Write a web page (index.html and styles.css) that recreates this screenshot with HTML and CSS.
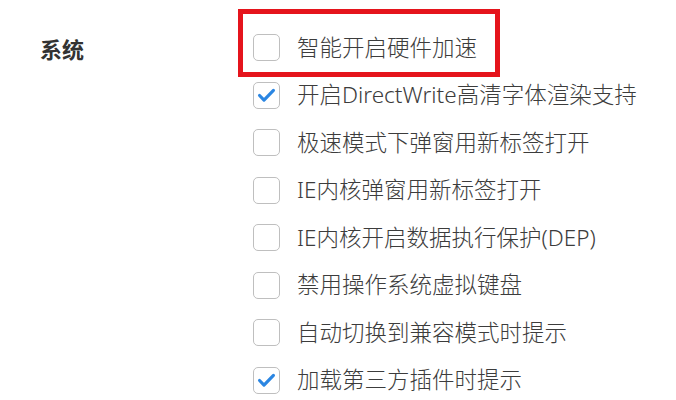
FILE: index.html
```html
<!DOCTYPE html>
<html lang="zh-CN">
<head>
<meta charset="utf-8">
<title>系统设置</title>
<link rel="stylesheet" href="styles.css">
</head>
<body>
<div class="section">
  <div class="label">系统</div>
  <div class="options">
    <label class="row highlighted"><span class="box"></span><span class="text">智能开启硬件加速</span></label>
    <label class="row"><span class="box checked"><svg viewBox="0 0 27 27"><polyline points="6,13.5 10.8,18.5 21,8"/></svg></span><span class="text">开启DirectWrite高清字体渲染支持</span></label>
    <label class="row"><span class="box"></span><span class="text">极速模式下弹窗用新标签打开</span></label>
    <label class="row"><span class="box"></span><span class="text">IE内核弹窗用新标签打开</span></label>
    <label class="row"><span class="box"></span><span class="text">IE内核开启数据执行保护(DEP)</span></label>
    <label class="row"><span class="box"></span><span class="text">禁用操作系统虚拟键盘</span></label>
    <label class="row"><span class="box"></span><span class="text">自动切换到兼容模式时提示</span></label>
    <label class="row"><span class="box checked"><svg viewBox="0 0 27 27"><polyline points="6,13.5 10.8,18.5 21,8"/></svg></span><span class="text">加载第三方插件时提示</span></label>
  </div>
</div>
</body>
</html>
```
FILE: styles.css
```css
html, body {
  margin: 0;
  padding: 0;
  background: #ffffff;
}
body {
  font-family: "Noto Sans", "Noto Sans CJK SC", sans-serif;
  color: #3a3a3a;
  width: 676px;
  height: 400px;
  overflow: hidden;
}
.section {
  display: flex;
  padding-top: 24px;
}
.label {
  width: 213px;
  padding-left: 40px;
  height: 48px;
  line-height: 48px;
  font-size: 22px;
  font-weight: 700;
  color: #333;
  font-family: "Noto Sans CJK SC", sans-serif;
}
.options {
  display: flex;
  flex-direction: column;
}
.row {
  display: flex;
  align-items: center;
  gap: 17px;
  height: 47.5px;
  position: relative;
}
.highlighted::before {
  content: "";
  position: absolute;
  left: -15px;
  top: -15px;
  width: 262px;
  height: 68px;
  box-sizing: border-box;
  border: 5px solid #e5141c;
}
.box {
  width: 27px;
  height: 27px;
  box-sizing: border-box;
  border: 1.6px solid #bfbfbf;
  border-radius: 5px;
  background: #fff;
  flex: none;
  display: flex;
}
.box svg {
  width: 100%;
  height: 100%;
}
.box polyline {
  fill: none;
  stroke: #2b86e2;
  stroke-width: 3.4;
  stroke-linecap: round;
  stroke-linejoin: round;
}
.text {
  font-size: 22.5px;
  font-weight: 300;
  line-height: 30px;
  white-space: nowrap;
  color: #3c3c3c;
}
```
